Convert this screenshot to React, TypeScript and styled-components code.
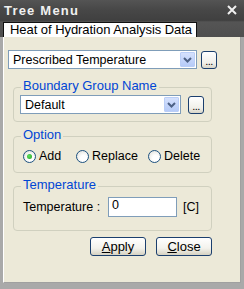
import React from "react";
import styled, { createGlobalStyle } from "styled-components";

const Global = createGlobalStyle`
  html, body { margin: 0; padding: 0; background: #7a7a7a; }
  body { font-family: "Liberation Sans", Arial, sans-serif; font-size: 12px; }
`;

const Window = styled.div`
  width: 244px;
  height: 289px;
  display: flex;
  flex-direction: column;
  background: #a9a9a9;
  box-sizing: border-box;
  overflow: hidden;
`;

const TitleBar = styled.div`
  height: 20px;
  flex: none;
  display: flex;
  align-items: center;
  justify-content: space-between;
  padding: 0 7px 0 4px;
  background: linear-gradient(#545454, #474747 50%, #404040);
  color: #f0f0f0;
  font-weight: bold;
  font-size: 13px;
  letter-spacing: 1.2px;
`;

const TabStrip = styled.div`
  height: 17px;
  flex: none;
  display: flex;
  align-items: flex-end;
  padding-left: 3px;
  background: linear-gradient(#3c3c3c, #555555 2px, #4e4e4e);
`;

const Tab = styled.div`
  height: 15px;
  width: 194px;
  box-sizing: border-box;
  background: #ffffff;
  border: 1px solid #111111;
  border-bottom: none;
  padding: 0 0 0 6px;
  line-height: 14px;
  color: #000000;
  font-size: 13px;
  letter-spacing: -0.05px;
  white-space: nowrap;
`;

const Panel = styled.div`
  flex: 1;
  margin: 0 3px 0 3px;
  background: #ece9d8;
  border-left: 1px solid #ffffff;
  border-right: 1px solid #a0a0a0;
  border-bottom: 1px solid #a0a0a0;
  display: flex;
  flex-direction: column;
  padding: 13px 0 0 4px;
  box-sizing: border-box;
`;

const BottomFrame = styled.div`
  height: 6px;
  flex: none;
`;

const Row = styled.div<{ $gap?: number; $pt?: number }>`
  display: flex;
  align-items: center;
  gap: ${(p) => p.$gap ?? 4}px;
  padding-top: ${(p) => p.$pt ?? 0}px;
`;

const SelectBox = styled.div<{ $w: number }>`
  width: ${(p) => p.$w}px;
  height: 19px;
  box-sizing: border-box;
  border: 1px solid #7f9db9;
  background: #ffffff;
  display: flex;
  align-items: center;
  padding: 1px;
`;

const SelectText = styled.div`
  flex: 1;
  padding-left: 3px;
  font-size: 12.5px;
  color: #000;
  white-space: nowrap;
`;

const ArrowBtn = styled.div`
  width: 15px;
  height: 15px;
  box-sizing: border-box;
  border: 1px solid #bacef7;
  border-radius: 1px;
  background: linear-gradient(#d5e1fd, #b6cbf8);
  display: flex;
  align-items: center;
  justify-content: center;
`;

const DotsBtn = styled.div`
  width: 16px;
  height: 18px;
  box-sizing: border-box;
  border: 1px solid #1b3f6e;
  border-radius: 3px;
  background: linear-gradient(#ffffff, #f0efe8 70%, #d8d5c8);
  display: flex;
  align-items: flex-end;
  justify-content: center;
  font-size: 11px;
  line-height: 13px;
  color: #000;
  letter-spacing: -0.5px;
`;

const GroupBox = styled.div<{ $h: number; $mt: number }>`
  position: relative;
  margin: ${(p) => p.$mt}px 0 0 5px;
  width: 199px;
  height: ${(p) => p.$h}px;
  box-sizing: border-box;
  border: 1px solid #d0d0bf;
  border-radius: 4px;
  padding: 7px 0 0 6px;
`;

const Legend = styled.span`
  position: absolute;
  top: -9px;
  left: 7px;
  padding: 0 2px 0 2px;
  background: #ece9d8;
  color: #0046d5;
  font-size: 13px;
  line-height: 14px;
`;

const RadioRow = styled.div`
  display: flex;
  align-items: center;
  padding-top: 5px;
  padding-left: 3px;
`;

const RadioItem = styled.label<{ $w: number }>`
  display: flex;
  align-items: center;
  gap: 3px;
  width: ${(p) => p.$w}px;
  font-size: 12.5px;
  color: #000;
`;

const RadioCircle = styled.span<{ $on?: boolean }>`
  width: 13px;
  height: 13px;
  box-sizing: border-box;
  border-radius: 50%;
  border: 1px solid #1c5180;
  background: radial-gradient(circle at 60% 65%, #ffffff 30%, #dcdcd4 100%);
  display: flex;
  align-items: center;
  justify-content: center;
  &::after {
    content: "";
    display: ${(p) => (p.$on ? "block" : "none")};
    width: 5px;
    height: 5px;
    border-radius: 50%;
    background: radial-gradient(circle at 40% 40%, #5ee05e, #21a121);
  }
`;

const FieldLabel = styled.span`
  width: 85px;
  padding-left: 3px;
  font-size: 12.5px;
  color: #000;
`;

const Input = styled.div`
  width: 69px;
  height: 20px;
  box-sizing: border-box;
  border: 1px solid #7f9db9;
  background: #fff;
  padding: 0 0 0 3px;
  font-size: 12.5px;
  line-height: 15px;
  color: #000;
`;

const Unit = styled.span`
  margin-left: 6px;
  font-size: 12.5px;
  color: #000;
`;

const ButtonRow = styled.div`
  display: flex;
  justify-content: flex-end;
  gap: 10px;
  width: 204px;
  margin-top: 6px;
`;

const Button = styled.div`
  width: 56px;
  height: 19px;
  box-sizing: border-box;
  border: 1px solid #1b3f6e;
  border-radius: 3px;
  background: linear-gradient(#ffffff, #f3f2ec 60%, #d6d2c2);
  display: flex;
  align-items: center;
  justify-content: center;
  font-size: 13px;
  color: #000;
  & u { text-decoration: underline; }
`;

const Chevron = () => (
  <svg width="9" height="6" viewBox="0 0 9 6">
    <path d="M1 1 L4.5 4.5 L8 1" fill="none" stroke="#4d6185" strokeWidth="2" />
  </svg>
);

const CloseX = () => (
  <svg width="10" height="10" viewBox="0 0 10 10">
    <path d="M1 1 L9 9 M9 1 L1 9" stroke="#f0f0f0" strokeWidth="2" />
  </svg>
);

export default function App() {
  return (
    <>
      <Global />
      <Window>
        <TitleBar>
          <span>Tree Menu</span>
          <CloseX />
        </TitleBar>
        <TabStrip>
          <Tab>Heat of Hydration Analysis Data</Tab>
        </TabStrip>
        <Panel>
          <Row $gap={4}>
            <SelectBox $w={189}>
              <SelectText>Prescribed Temperature</SelectText>
              <ArrowBtn>
                <Chevron />
              </ArrowBtn>
            </SelectBox>
            <DotsBtn>...</DotsBtn>
          </Row>
          <GroupBox $h={35} $mt={18}>
            <Legend>Boundary Group Name</Legend>
            <Row $gap={7}>
              <SelectBox $w={161}>
                <SelectText>Default</SelectText>
                <ArrowBtn>
                  <Chevron />
                </ArrowBtn>
              </SelectBox>
              <DotsBtn>...</DotsBtn>
            </Row>
          </GroupBox>
          <GroupBox $h={37} $mt={14}>
            <Legend>Option</Legend>
            <RadioRow>
              <RadioItem $w={53}>
                <RadioCircle $on />
                Add
              </RadioItem>
              <RadioItem $w={72}>
                <RadioCircle />
                Replace
              </RadioItem>
              <RadioItem $w={60}>
                <RadioCircle />
                Delete
              </RadioItem>
            </RadioRow>
          </GroupBox>
          <GroupBox $h={45} $mt={13}>
            <Legend>Temperature</Legend>
            <Row $gap={0} $pt={3}>
              <FieldLabel>Temperature :</FieldLabel>
              <Input>0</Input>
              <Unit>[C]</Unit>
            </Row>
          </GroupBox>
          <ButtonRow>
            <Button>
              <span>
                <u>A</u>pply
              </span>
            </Button>
            <Button>
              <span>
                <u>C</u>lose
              </span>
            </Button>
          </ButtonRow>
        </Panel>
        <BottomFrame />
      </Window>
    </>
  );
}
